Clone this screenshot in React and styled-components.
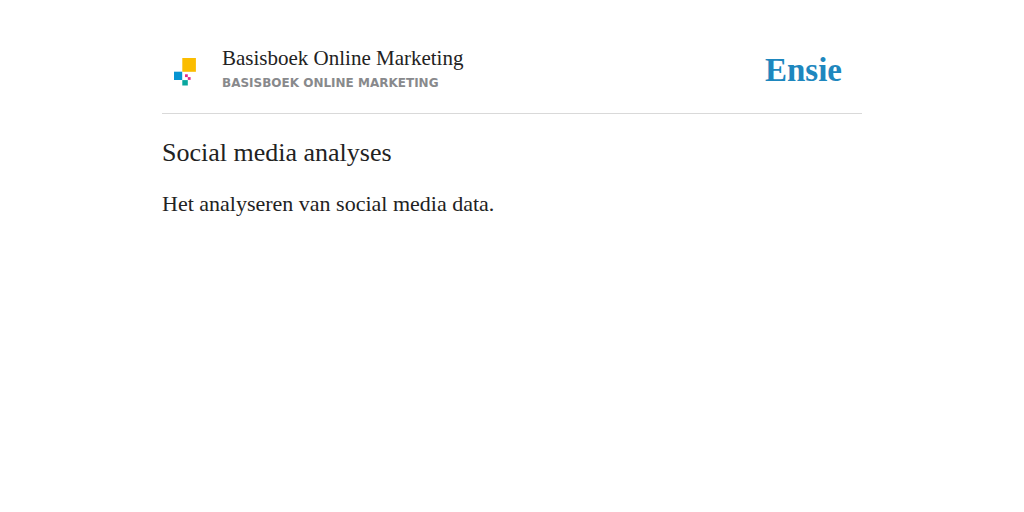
import React from "react";
import styled, { createGlobalStyle } from "styled-components";

const App = () => {
  return (
    <>
      <GlobalStyle />
      <Page>
        <Header>
          <Source>
            <SourceLogo />
            <div>
              <SourceName>Basisboek Online Marketing</SourceName>
              <SourceLabel>Basisboek Online Marketing</SourceLabel>
            </div>
          </Source>
          <Brand href="/">Ensie</Brand>
        </Header>
        <main>
          <Title>Social media analyses</Title>
          <Definition>Het analyseren van social media data.</Definition>
        </main>
      </Page>
    </>
  );
};

const SourceLogo = () => (
  <LogoSvg viewBox="0 0 50 50" aria-hidden="true">
    <rect x="10.3" y="8" width="13.6" height="13.8" fill="#fbbd00" />
    <rect x="2" y="21.7" width="8.2" height="8.3" fill="#0694d2" />
    <rect x="13" y="24.3" width="2.8" height="2.8" fill="#e22a88" />
    <rect x="15.8" y="27.1" width="2.8" height="2.8" fill="#e22a88" />
    <rect x="10.3" y="30.1" width="5.5" height="5.4" fill="#08a79f" />
  </LogoSvg>
);

export default App;

const GlobalStyle = createGlobalStyle`
  * {
    box-sizing: border-box;
  }
  body {
    margin: 0;
    background: #fff;
    color: #222;
    font-family: "Liberation Serif", serif;
  }
`;
const Page = styled.div`
  max-width: 700px;
  margin: 0 auto;
  padding-top: 40px;
`;
const Header = styled.header`
  display: flex;
  justify-content: space-between;
  align-items: flex-start;
  padding: 0 20px 13px 10px;
  border-bottom: 1px solid #d9d9d9;
`;
const Source = styled.div`
  display: flex;
  align-items: flex-start;
`;
const LogoSvg = styled.svg`
  width: 50px;
  height: 50px;
  margin-top: 10px;
`;
const SourceName = styled.p`
  margin: 4px 0 0;
  font-size: 21px;
  line-height: 28px;
`;
const SourceLabel = styled.p`
  margin: 0;
  font-family: "DejaVu Sans", sans-serif;
  font-weight: 700;
  font-size: 12px;
  line-height: 22px;
  text-transform: uppercase;
  color: #88898c;
`;
const Brand = styled.a`
  font-weight: 700;
  font-size: 33px;
  line-height: 60px;
  color: #1e87be;
  text-decoration: none;
`;
const Title = styled.h1`
  margin: 24px 0 0;
  font-weight: 400;
  font-size: 26px;
  line-height: 30px;
`;
const Definition = styled.p`
  margin: 20px 0 0;
  font-size: 22px;
  line-height: 32px;
`;
